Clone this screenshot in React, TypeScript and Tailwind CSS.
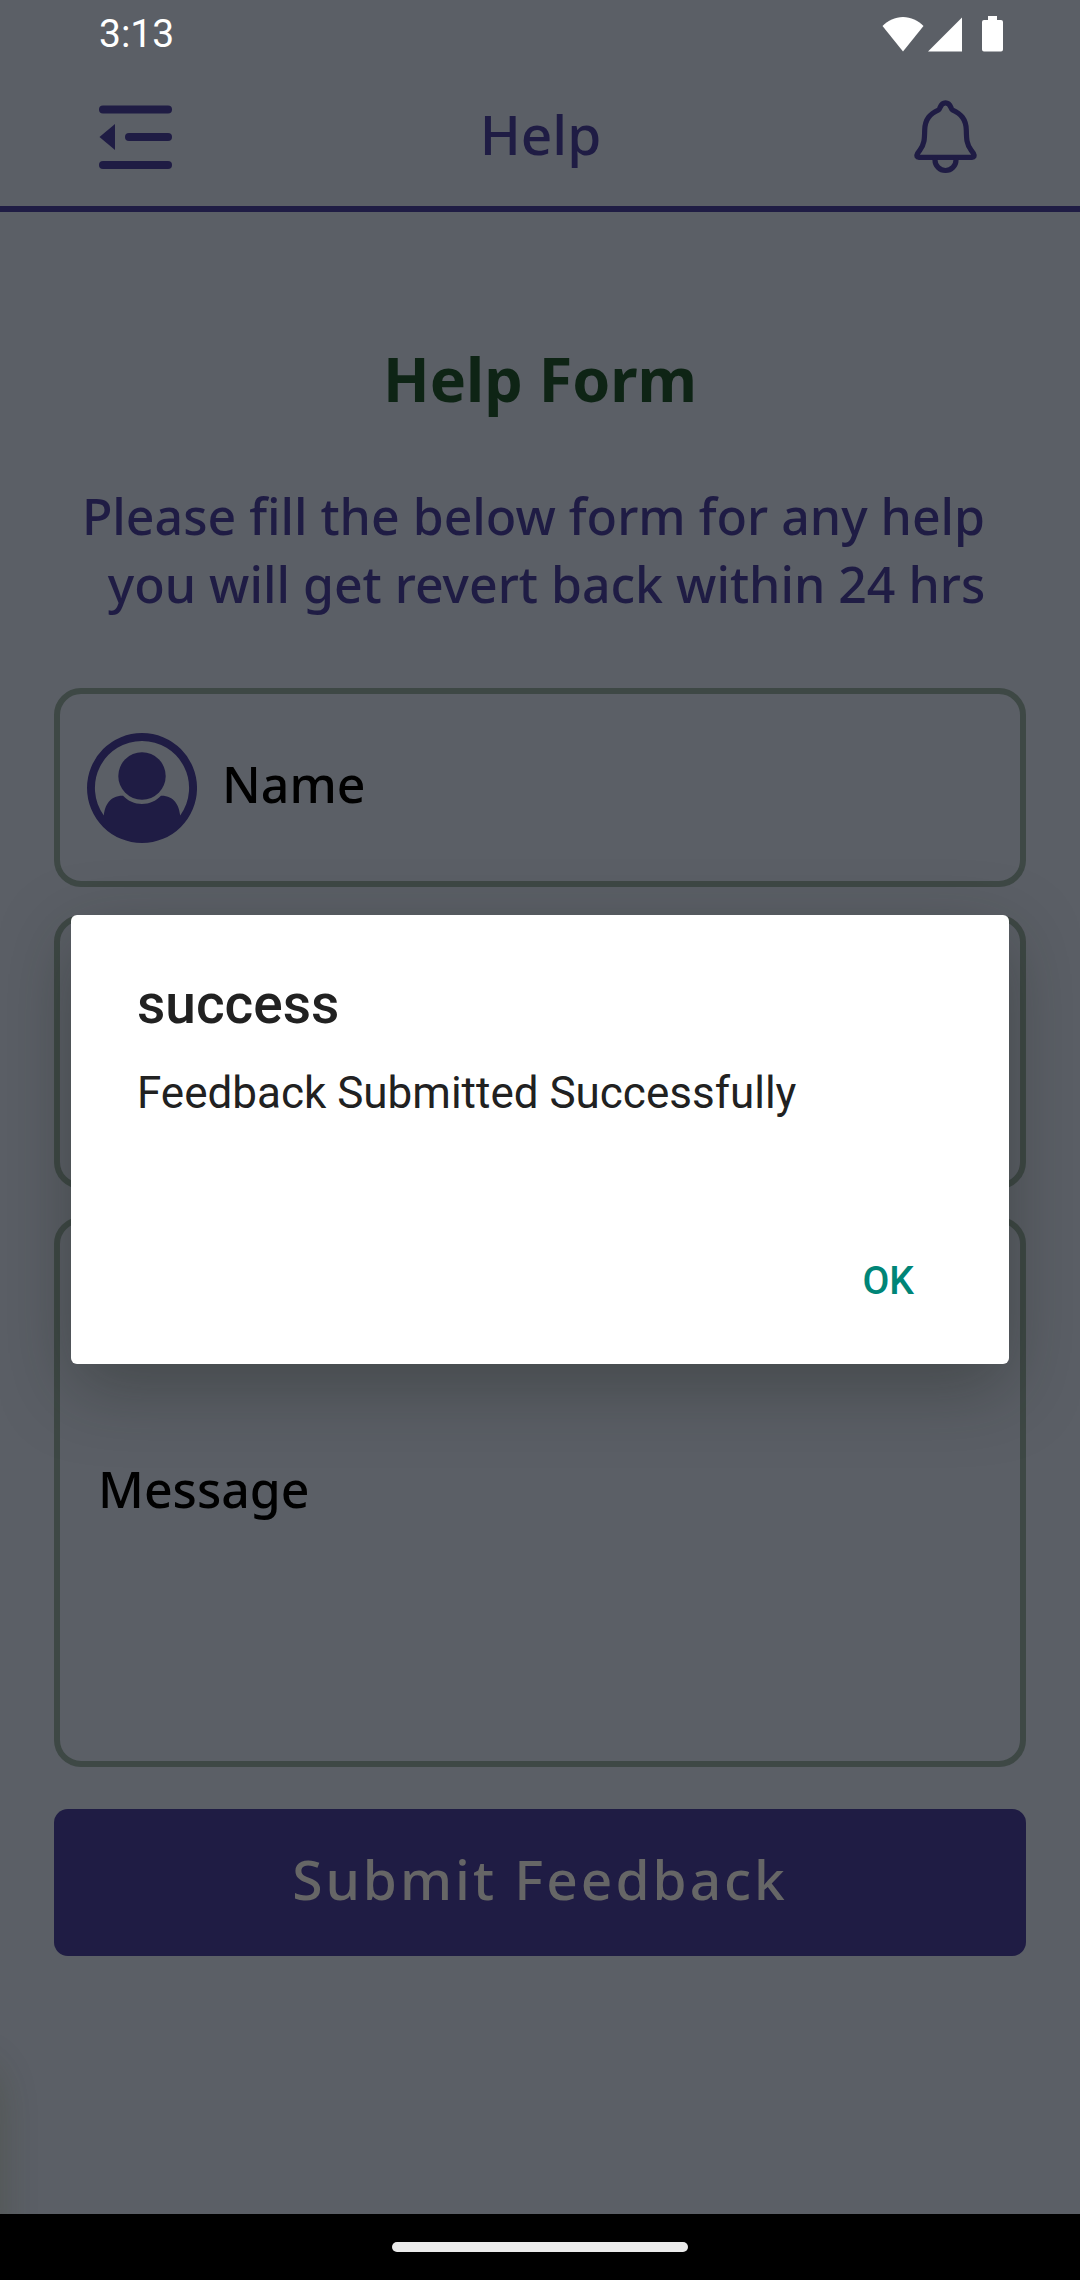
import React from "react";

function WifiIcon() {
  return (
    <svg width="42" height="36" viewBox="0 0 42 36" fill="currentColor" aria-hidden="true">
      <path d="M21 35.500L0.500 10C6 4.500 13 1 21 1s15 3.500 20.500 9z" />
    </svg>
  );
}

function SignalIcon() {
  return (
    <svg width="34" height="36" viewBox="0 0 34 36" fill="currentColor" aria-hidden="true">
      <path d="M34 1.500V35.500H0z" />
    </svg>
  );
}

function BatteryIcon() {
  return (
    <svg width="21" height="36" viewBox="0 0 21 36" fill="currentColor" aria-hidden="true">
      <path d="M6 0h9v4h4a2 2 0 0 1 2 2v27.500a2 2 0 0 1-2 2H2a2 2 0 0 1-2-2V6a2 2 0 0 1 2-2h4z" />
    </svg>
  );
}

function MenuIcon() {
  return (
    <svg width="74" height="64" viewBox="0 0 74 64" fill="currentColor" aria-hidden="true">
      <rect x="0" y="0.500" width="73" height="8" rx="4" />
      <rect x="26" y="28" width="47" height="8" rx="4" />
      <rect x="0" y="56" width="73" height="8" rx="4" />
      <path d="M0.500 32L16 19v26z" />
    </svg>
  );
}

function BellIcon() {
  return (
    <svg
      width="66"
      height="78"
      viewBox="0 0 66 78"
      fill="none"
      stroke="currentColor"
      strokeWidth="5.200"
      strokeLinejoin="round"
      aria-hidden="true"
    >
      <path d="M26.500 12C28.500 11 28 4.800 33.500 4.800C39 4.800 38.500 11 40.500 12C49 16 54 21 54.300 32C54.500 41 54.500 46 59 52L61.500 55.500C63 58 62 59.300 60 59.300H7C5 59.300 4 58 5.500 55.500L8 52C12.500 46 12.500 41 12.700 32C13 21 18 16 26.500 12Z" />
      <path d="M23 60v2a10.500 10.500 0 0 0 21 0v-2" />
    </svg>
  );
}

function AvatarIcon() {
  return (
    <svg width="110" height="110" viewBox="0 0 110 110" fill="currentColor" aria-hidden="true" className="shrink-0">
      <path
        fillRule="evenodd"
        d="M55 0a55 55 0 1 1 0 110a55 55 0 0 1 0-110zM55 8A47 47 0 0 0 16.800 82.500C18 72 23 62.500 36 62.800C41 68 47.500 71 55 71S69 68 74 62.800C87 62.500 92 72 93.200 82.500A47 47 0 0 0 55 8z"
      />
      <circle cx="55" cy="43" r="23.700" />
    </svg>
  );
}

export default function App() {
  return (
    <div className="relative flex min-h-screen flex-col overflow-hidden bg-[#5b5f66] font-['Noto_Sans',sans-serif] font-medium text-[#1f1c44]">
      <header className="border-b-6 border-[#1f1c44]">
        <div className="flex h-[68px] items-center justify-between pr-[77px] pl-[99px] text-white">
          <time className="font-['Roboto',sans-serif] text-[39px] leading-[46px] font-normal">3:13</time>
          <div className="flex items-center gap-1">
            <WifiIcon />
            <SignalIcon />
            <span className="w-3" />
            <BatteryIcon />
          </div>
        </div>
        <div className="flex h-[138px] items-center justify-between pr-[102px] pl-[99px]">
          <button type="button" aria-label="Menu">
            <MenuIcon />
          </button>
          <h1 className="pr-1 pb-2 text-[55px] leading-[75px]">Help</h1>
          <button type="button" aria-label="Notifications">
            <BellIcon />
          </button>
        </div>
      </header>

      <main className="flex grow flex-col px-[54px] pt-[125px]">
        <h2 className="text-center text-[61px] leading-[83px] font-bold text-[#0e2415]">Help Form</h2>
        <p className="mt-[62px] text-center text-[50px] leading-[68px] whitespace-pre">
          {"Please fill the below form for any help \n you will get revert back within 24 hrs"}
        </p>

        <form className="mt-[70px] flex flex-col gap-7 text-[50px] leading-[68px] text-black">
          <label className="flex h-[199px] items-center gap-[25px] rounded-[27px] border-6 border-[#3e4845] pr-7 pl-[27px]">
            <span className="text-[#1f1c44]">
              <AvatarIcon />
            </span>
            <input
              type="text"
              aria-label="Name"
              placeholder="Name"
              className="min-w-0 grow bg-transparent pb-2 outline-none placeholder:text-black"
            />
          </label>
          <input
            type="email"
            aria-label="Email"
            className="h-[274px] rounded-[27px] border-6 border-[#3e4845] bg-transparent px-[38px] outline-none"
          />
          <textarea
            aria-label="Message"
            placeholder="Message"
            className="h-[550px] resize-none rounded-[27px] border-6 border-[#3e4845] bg-transparent px-[38px] pt-[232px] outline-none placeholder:text-black"
          />
          <button
            type="submit"
            className="mt-3.5 h-[147px] rounded-[14px] bg-[#1f1c44] pb-2 text-[55px] leading-[75px] tracking-[3px] text-[#666666]"
          >
            Submit Feedback
          </button>
        </form>
      </main>

      <div className="absolute bottom-[30px] left-[-40px] h-[190px] w-10 rounded-tr-[40px] shadow-[0_0_36px_rgba(50,60,20,0.250)]" />

      <footer className="relative flex h-[66px] items-center justify-center bg-black">
        <div className="h-2.5 w-[296px] rounded-full bg-[#ebebeb]" />
      </footer>

      <div className="absolute inset-0 flex items-center px-[71px] pb-0.5">
        <div
          role="alertdialog"
          aria-labelledby="dialog-title"
          aria-describedby="dialog-text"
          className="flex h-[449px] grow flex-col rounded-[6px] bg-white px-[66px] pt-[57px] font-['Roboto',sans-serif] text-[#212121] shadow-[0_24px_72px_rgba(24,28,24,0.340)]"
        >
          <h2 id="dialog-title" className="text-[55px] leading-[65px] font-medium">
            success
          </h2>
          <p id="dialog-text" className="mt-[30px] text-[44px] leading-[52px] font-normal">
            Feedback Submitted Successfully
          </p>
          <button
            type="button"
            className="mt-auto mb-[34px] self-end px-[29px] py-[26px] text-[39px] leading-[46px] font-medium text-[#008577]"
          >
            OK
          </button>
        </div>
      </div>
    </div>
  );
}
